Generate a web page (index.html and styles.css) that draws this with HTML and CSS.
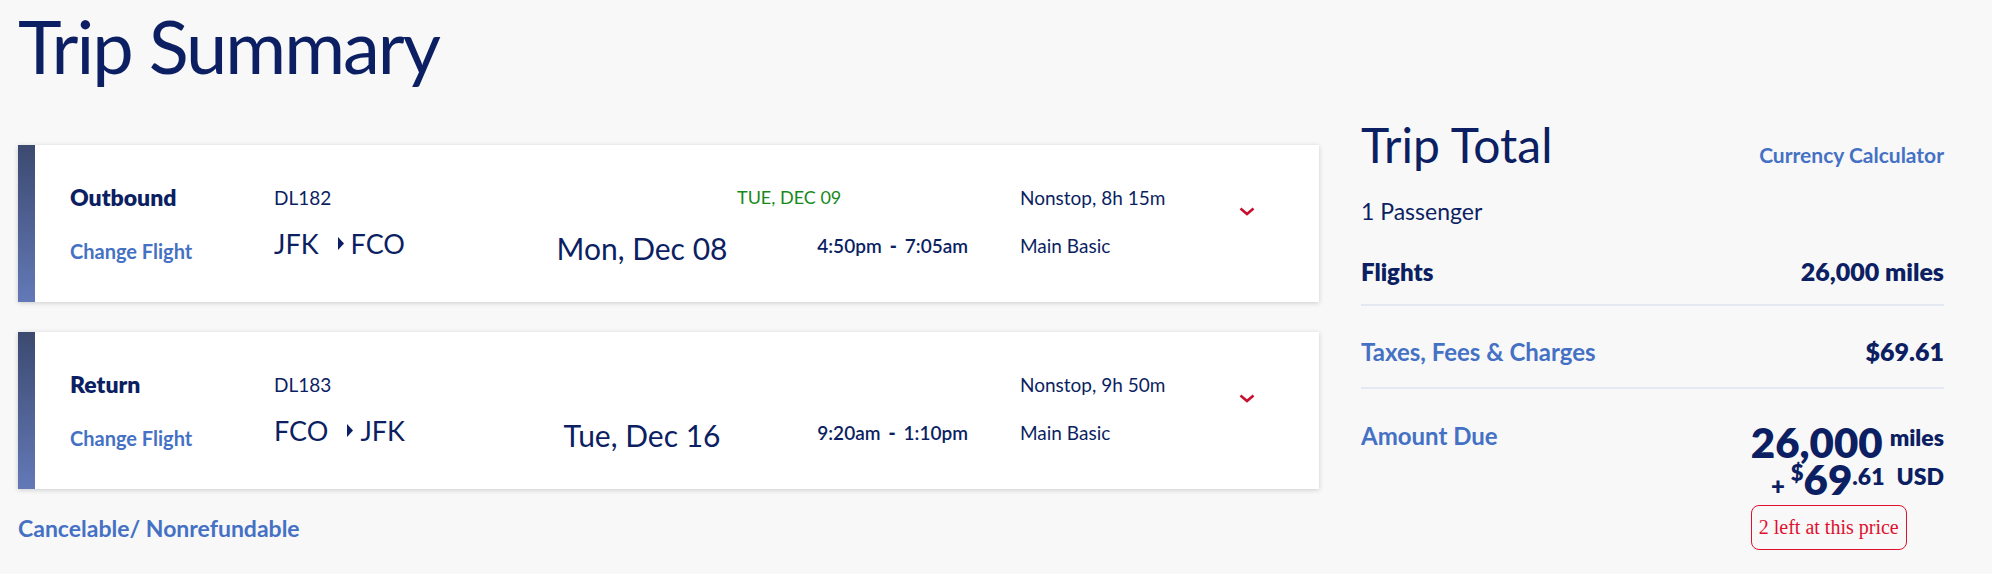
FILE: index.html
```html
<!DOCTYPE html>
<html lang="en">
<head>
<meta charset="utf-8">
<title>Trip Summary</title>
<link rel="stylesheet" href="styles.css">
</head>
<body>
<div class="page">
  <h1 class="page-title">Trip Summary</h1>
  <div class="layout">
    <section class="trips">
      <article class="flight-card">
        <div class="accent"></div>
        <div class="flight-grid">
          <div class="leg">Outbound</div>
          <div class="flight-no">DL182</div>
          <div class="arrival-date">TUE, DEC 09</div>
          <div class="duration">Nonstop, 8h 15m</div>
          <svg class="chevron" width="16" height="9" viewBox="0 0 16 9"><polyline points="1.5,1.5 8,7 14.5,1.5" fill="none" stroke="#c8102e" stroke-width="2.6"/></svg>
          <a class="change" href="#">Change Flight</a>
          <div class="route">JFK<svg class="tri" width="6" height="13" viewBox="0 0 6 13"><polygon points="0,0 6,6.5 0,13" fill="#0c1f63"/></svg>FCO</div>
          <div class="date">Mon, Dec 08</div>
          <div class="times">4:50pm<span class="dash">-</span>7:05am</div>
          <div class="fare">Main Basic</div>
        </div>
      </article>
      <article class="flight-card">
        <div class="accent"></div>
        <div class="flight-grid">
          <div class="leg">Return</div>
          <div class="flight-no">DL183</div>
          <div class="duration">Nonstop, 9h 50m</div>
          <svg class="chevron" width="16" height="9" viewBox="0 0 16 9"><polyline points="1.5,1.5 8,7 14.5,1.5" fill="none" stroke="#c8102e" stroke-width="2.6"/></svg>
          <a class="change" href="#">Change Flight</a>
          <div class="route">FCO<svg class="tri" width="6" height="13" viewBox="0 0 6 13"><polygon points="0,0 6,6.5 0,13" fill="#0c1f63"/></svg>JFK</div>
          <div class="date">Tue, Dec 16</div>
          <div class="times">9:20am<span class="dash">-</span>1:10pm</div>
          <div class="fare">Main Basic</div>
        </div>
      </article>
      <a class="policy" href="#">Cancelable/ Nonrefundable</a>
    </section>
    <aside class="summary">
      <div class="summary-head">
        <h2 class="summary-title">Trip Total</h2>
        <a class="calc" href="#">Currency Calculator</a>
      </div>
      <div class="passengers">1 Passenger</div>
      <div class="line-item">
        <span class="item-label">Flights</span>
        <span class="item-value">26,000 miles</span>
      </div>
      <div class="line-item">
        <a class="item-link" href="#">Taxes, Fees &amp; Charges</a>
        <span class="item-value">$69.61</span>
      </div>
      <div class="due">
        <a class="item-link" href="#">Amount Due</a>
        <div class="due-amount">
          <div class="due-row"><span class="big">26,000</span><span class="unit">miles</span></div>
          <div class="due-row"><span class="plus">+</span><span class="cur">$</span><span class="big">69</span><span class="cents">.61</span><span class="usd">USD</span></div>
          <div class="badge">2 left at this price</div>
        </div>
      </div>
    </aside>
  </div>
</div>
</body>
</html>
```

FILE: styles.css
```css
* { box-sizing: border-box; }

body {
  margin: 0;
  background: #f8f8f8;
  font-family: Lato, "Open Sans", sans-serif;
  color: #0c1f63;
}

.page {
  padding: 0 48px 0 18px;
}

.page-title {
  margin: 0;
  padding-top: 8px;
  font-size: 74px;
  line-height: 76px;
  font-weight: 400;
  letter-spacing: -2px;
}

.layout {
  display: flex;
  align-items: flex-start;
  gap: 42px;
  margin-top: 37px;
}

.trips {
  width: 1301px;
  padding-top: 24px;
}

.flight-card {
  display: flex;
  height: 157px;
  background: #fff;
  box-shadow: 0 1px 5px rgba(0, 0, 0, 0.18);
}

.flight-card + .flight-card {
  margin-top: 30px;
}

.accent {
  width: 17px;
  flex: none;
  background: linear-gradient(#3c4a70, #6379b7);
}

.flight-grid {
  display: grid;
  grid-template-columns: 204px 274px 188px 232px 52px 219px 16px;
  grid-template-rows: 30px 30px;
  row-gap: 18px;
  padding: 37px 0 0 35px;
  align-items: center;
}

.leg {
  grid-column: 1;
  grid-row: 1;
  font-size: 23px;
  font-weight: 800;
}

.flight-no {
  grid-column: 2;
  grid-row: 1;
  font-size: 19px;
}

.arrival-date {
  grid-column: 4;
  grid-row: 1;
  font-size: 18px;
  color: #168a1a;
  padding-left: 1px;
}

.duration {
  grid-column: 6;
  grid-row: 1;
  font-size: 19px;
  white-space: nowrap;
}

.chevron {
  grid-column: 7;
  grid-row: 1 / span 2;
  align-self: start;
  margin-top: 25px;
  display: block;
}

.change {
  grid-column: 1;
  grid-row: 2;
  font-size: 20px;
  font-weight: 700;
  color: #4571c4;
  text-decoration: none;
  margin-top: 12px;
}

.route {
  grid-column: 2;
  grid-row: 2;
  font-size: 27px;
  display: flex;
  align-items: center;
  margin-bottom: 4px;
}

.tri {
  margin: 0 7px 0 19px;
}

.date {
  grid-column: 3;
  grid-row: 2;
  font-size: 30px;
  text-align: center;
  margin-top: 6px;
  white-space: nowrap;
}

.times {
  grid-column: 4;
  grid-row: 2;
  font-size: 19px;
  font-weight: 600;
  text-align: right;
  white-space: nowrap;
}

.dash {
  font-weight: 800;
  margin: 0 8px;
}

.fare {
  grid-column: 6;
  grid-row: 2;
  font-size: 19px;
}

.policy {
  display: block;
  margin-top: 26px;
  font-size: 23px;
  line-height: 26px;
  font-weight: 700;
  color: #4571c4;
  text-decoration: none;
}

.summary {
  width: 583px;
}

.summary-head {
  display: flex;
  justify-content: space-between;
  align-items: baseline;
}

.summary-title {
  margin: 0;
  font-size: 48px;
  line-height: 48px;
  font-weight: 400;
}

.calc {
  font-size: 21px;
  font-weight: 700;
  color: #4571c4;
  text-decoration: none;
}

.passengers {
  margin-top: 28px;
  font-size: 23px;
  line-height: 28px;
}

.line-item {
  display: flex;
  justify-content: space-between;
  align-items: baseline;
  padding: 32px 0 18px;
  border-bottom: 2px solid #e3e8f1;
  font-size: 24px;
  line-height: 28px;
}

.line-item + .line-item {
  padding-top: 31px;
  padding-bottom: 21px;
}

.item-label {
  font-weight: 800;
}

.item-value {
  font-size: 25px;
  font-weight: 800;
}

.item-link {
  font-size: 24px;
  line-height: 28px;
  font-weight: 700;
  color: #4571c4;
  text-decoration: none;
}

.due {
  display: flex;
  justify-content: space-between;
  align-items: flex-start;
  padding-top: 33px;
}

.due-amount {
  display: flex;
  flex-direction: column;
  align-items: flex-end;
  margin-top: 2px;
}

.due-row {
  font-size: 42px;
  line-height: 37px;
  font-weight: 800;
  white-space: nowrap;
}

.big {
  display: inline-block;
  line-height: 37px;
}

.unit,
.plus,
.cur,
.cents,
.usd {
  display: inline-block;
  line-height: 20px;
}

.unit {
  font-size: 23px;
  margin-left: 7px;
  vertical-align: 12px;
}

.plus {
  font-size: 24px;
  margin-right: 6px;
}

.cur {
  font-size: 22px;
  vertical-align: 14px;
}

.cents {
  font-size: 23px;
  vertical-align: 10px;
}

.usd {
  font-size: 23px;
  margin-left: 12px;
  vertical-align: 10px;
}

.badge {
  align-self: flex-start;
  margin-top: 7px;
  padding: 10px 7px;
  border: 1px solid #e0102f;
  border-radius: 8px;
  font-family: "Liberation Serif", "Times New Roman", serif;
  font-size: 20px;
  line-height: 23px;
  color: #e0102f;
  white-space: nowrap;
}
```
